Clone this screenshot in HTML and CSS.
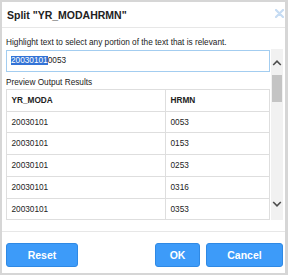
FILE: index.html
```html
<!DOCTYPE html>
<html lang="en">
<head>
<meta charset="utf-8">
<title>Split</title>
<link rel="stylesheet" href="styles.css">
</head>
<body>
<div class="dialog">
  <div class="titlebar">
    <span class="title">Split "YR_MODAHRMN"</span>
    <button class="close" aria-label="Close">
      <svg width="9" height="9" viewBox="0 0 9 9"><path d="M1 1 L8 8 M8 1 L1 8" stroke="#c6dcf3" stroke-width="2.2" stroke-linecap="round" fill="none"/></svg>
    </button>
  </div>
  <div class="body">
    <div class="hint">Highlight text to select any portion of the text that is relevant.</div>
    <div class="scroller">
      <div class="scroll-content">
        <div class="textbox"><span class="sel">20030101</span>0053</div>
        <div class="label">Preview Output Results</div>
        <div class="grid">
          <div class="cell head">YR_MODA</div><div class="cell head">HRMN</div>
          <div class="cell">20030101</div><div class="cell">0053</div>
          <div class="cell">20030101</div><div class="cell">0153</div>
          <div class="cell">20030101</div><div class="cell">0253</div>
          <div class="cell">20030101</div><div class="cell">0316</div>
          <div class="cell">20030101</div><div class="cell">0353</div>
        </div>
      </div>
      <div class="scrollbar">
        <div class="sb-btn sb-up"><svg width="12" height="26" viewBox="0 0 12 26"><polyline points="2.2,16 6,12.2 9.8,16" fill="none" stroke="#4d4d4d" stroke-width="1.6"/></svg></div>
        <div class="sb-track"><div class="sb-thumb"></div></div>
        <div class="sb-btn sb-down"><svg width="12" height="26" viewBox="0 0 12 26"><polyline points="2.2,8 6,11.8 9.8,8" fill="none" stroke="#4d4d4d" stroke-width="1.6"/></svg></div>
      </div>
    </div>
  </div>
  <div class="footer">
    <button class="btn btn-reset">Reset</button>
    <div class="spacer"></div>
    <button class="btn btn-ok">OK</button>
    <button class="btn btn-cancel">Cancel</button>
  </div>
</div>
</body>
</html>
```
FILE: styles.css
```css
html, body {
  margin: 0;
  height: 100%;
}
body {
  background: #d6d6d6;
  font-family: "Liberation Sans", Arial, sans-serif;
  color: #222;
  overflow: hidden;
}
.dialog {
  margin: 2px 3px 2px 2px;
  height: 271px;
  background: #fff;
  display: flex;
  flex-direction: column;
  overflow: hidden;
}
.titlebar {
  height: 24px;
  padding: 1px 0 0 5px;
  border-bottom: 1px solid #e7e7e7;
  display: flex;
  justify-content: space-between;
  align-items: flex-start;
}
.title {
  font-size: 10.5px;
  font-weight: bold;
  line-height: 25px;
  color: #222;
}
.close {
  margin: 6px 1px 0 0;
  padding: 0;
  border: 0;
  background: none;
  width: 9px;
  height: 9px;
  display: flex;
}
.body {
  padding: 10.4px 2px 11px 4px;
  display: flex;
  flex-direction: column;
}
.hint {
  font-size: 8.25px;
  line-height: 10px;
  margin-bottom: 0.6px;
  color: #222;
}
.scroller {
  height: 171px;
  display: flex;
  overflow: hidden;
}
.scroll-content {
  flex: 1;
  overflow: hidden;
  padding: 1px 1px 0 0;
}
.textbox {
  height: 20px;
  border: 1px solid #a3cdf0;
  padding: 0 4px;
  font-size: 8.25px;
  line-height: 20px;
  color: #222;
}
.sel {
  background: #3373d6;
  color: #fff;
}
.label {
  font-size: 8.25px;
  line-height: 10px;
  margin: 5.6px 0 1.4px;
}
.grid {
  display: grid;
  grid-template-columns: 159px 1fr;
  grid-auto-rows: 21.75px;
  border-top: 1px solid #dedede;
  border-left: 1px solid #dedede;
}
.cell {
  box-sizing: border-box;
  border-right: 1px solid #dedede;
  border-bottom: 1px solid #dedede;
  padding: 0 4.5px;
  font-size: 8.25px;
  display: flex;
  align-items: center;
  color: #222;
}
.cell.head {
  font-weight: bold;
}
.scrollbar {
  width: 12px;
  background: #f1f1f1;
  display: flex;
  flex-direction: column;
}
.sb-btn {
  height: 26px;
  display: flex;
}
.sb-track {
  flex: 1;
  display: flex;
  flex-direction: column;
  align-items: center;
}
.sb-thumb {
  width: 10px;
  height: 27px;
  background: #c4c4c4;
}
.footer {
  border-top: 1px solid #e7e7e7;
  padding: 11px 2px 0 4px;
  display: flex;
  gap: 6px;
}
.spacer {
  flex: 1;
}
.btn {
  height: 24px;
  border: 1px solid #2f89e4;
  border-radius: 3px;
  background: #3d9bf9;
  color: #fff;
  font-family: "Liberation Sans", Arial, sans-serif;
  font-size: 10.5px;
  font-weight: bold;
  padding: 0;
}
.btn-reset { width: 72px; }
.btn-ok { width: 45px; }
.btn-cancel { width: 77px; }
```
